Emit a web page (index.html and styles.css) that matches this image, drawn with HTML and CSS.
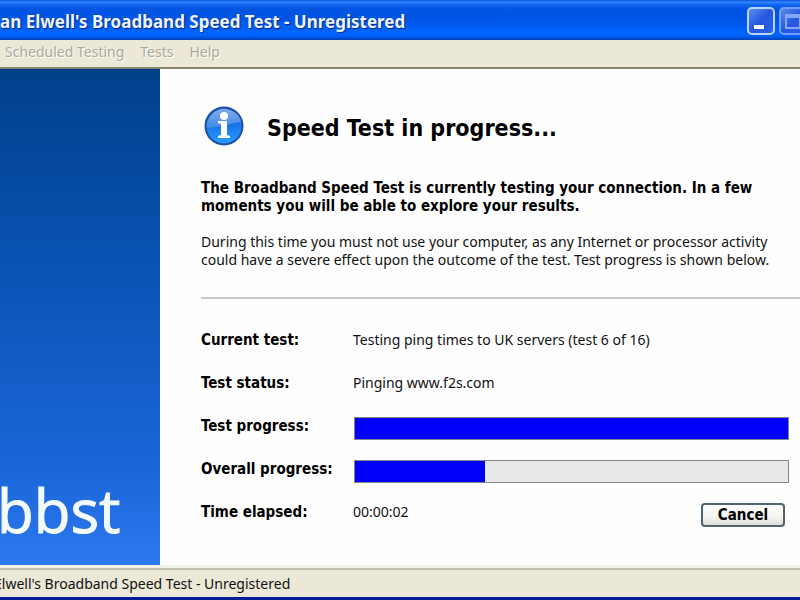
FILE: index.html
```html
<!DOCTYPE html>
<html lang="en">
<head>
    <meta charset="UTF-8">
    <meta name="viewport" content="width=device-width, initial-scale=1.0">
    <title>Broadband Speed Test</title>
    <link rel="stylesheet" href="styles.css">
</head>
<body>
    <header class="titlebar">
        <h1>an Elwell's Broadband Speed Test - Unregistered</h1>
        <div class="window-buttons">
            <button type="button" aria-label="Minimize">
                <svg width="24" height="24" viewBox="0 0 24 24"><path d="M5 16h10v4H5z" fill="#fff"/></svg>
            </button>
            <button type="button" class="disabled" aria-label="Maximize" disabled>
                <svg width="24" height="24" viewBox="0 0 24 24"><path d="M5 6h14v13H5zM5 8h14" fill="none" stroke="#86a5f5" stroke-width="2"/></svg>
            </button>
        </div>
    </header>
    <nav class="menu">
        <button type="button" disabled>Scheduled Testing</button>
        <button type="button" disabled>Tests</button>
        <button type="button" disabled>Help</button>
    </nav>
    <div class="window">
        <aside class="sidebar">bbst</aside>
        <main>
            <div class="heading">
                <svg width="40" height="40" viewBox="0 0 40 40">
                    <defs>
                        <linearGradient id="ball" x1="0" y1="0" x2="0" y2="1">
                            <stop offset="0" stop-color="#2263cf"/>
                            <stop offset="0.5" stop-color="#1b75e8"/>
                            <stop offset="1" stop-color="#2ba2ff"/>
                        </linearGradient>
                        <linearGradient id="shine" x1="0" y1="0" x2="0" y2="1">
                            <stop offset="0" stop-color="#fff" stop-opacity="0.45"/>
                            <stop offset="1" stop-color="#fff" stop-opacity="0.15"/>
                        </linearGradient>
                    </defs>
                    <circle cx="20" cy="20" r="18.5" fill="url(#ball)" stroke="#1d4fae" stroke-width="2"/>
                    <path d="M3 22C2 11 11 3 20 3s17 7 17 13C29 16 18 21 3 22z" fill="url(#shine)"/>
                    <circle cx="20" cy="10" r="4" fill="#fff"/>
                    <path d="M14 15h9v14l3 1v2H14v-2l3-1V18l-3-1z" fill="#fff"/>
                </svg>
                <h2>Speed Test in progress...</h2>
            </div>
            <p class="important">The Broadband Speed Test is currently testing your connection. In a few<br>moments you will be able to explore your results.</p>
            <p>During this time you must not use your computer, as any Internet or processor activity<br>could have a severe effect upon the outcome of the test. Test progress is shown below.</p>
            <hr>
            <dl class="status">
                <dt>Current test:</dt>
                <dd>Testing ping times to UK servers (test 6 of 16)</dd>
                <dt>Test status:</dt>
                <dd>Pinging www.f2s.com</dd>
                <dt>Test progress:</dt>
                <dd><div class="bar"><div class="fill" style="width: 100%"></div></div></dd>
                <dt>Overall progress:</dt>
                <dd><div class="bar"><div class="fill" style="width: 30%"></div></div></dd>
                <dt>Time elapsed:</dt>
                <dd class="elapsed">00:00:02 <button type="button" class="cancel">Cancel</button></dd>
            </dl>
        </main>
    </div>
    <footer><span>Elwell's Broadband Speed Test - Unregistered</span></footer>
</body>
</html>
```

FILE: styles.css
```css
* {
    box-sizing: border-box;
}
body, h1, h2, p, dl, dd, button {
    margin: 0;
    padding: 0;
}
body {
    min-height: 100vh;
    display: flex;
    flex-direction: column;
    overflow-x: hidden;
    font-family: Tahoma, "Noto Sans", sans-serif;
    font-size: 14px;
    line-height: 18px;
    color: #111;
    background-color: #fefefe;
}
button {
    font: inherit;
}
h2, dt, .important, .cancel {
    font-family: Tahoma, "DejaVu Sans Condensed", "DejaVu Sans", sans-serif;
    font-stretch: condensed;
    font-weight: bold;
    font-size: 15px;
    color: #000;
}

/* Title bar */
.titlebar {
    height: 40px;
    display: flex;
    align-items: center;
    justify-content: space-between;
    padding-top: 3px;
    overflow: hidden;
    background: linear-gradient(#0a50d8 0, #2f86fb 2px, #0f62ee 5px, #0054e0 10px, #0055e8 20px, #0065ff 32px, #0060f5 36px, #0040b8 40px);
}
h1 {
    font-family: "Trebuchet MS", "Noto Sans", sans-serif;
    font-size: 17px;
    font-weight: bold;
    line-height: 24px;
    white-space: nowrap;
    color: #eef5ff;
    text-shadow: 1px 1px 1px #0a2a80;
}
.window-buttons {
    display: flex;
    flex-shrink: 0;
    gap: 4px;
    margin-right: -7px;
    margin-bottom: 2px;
}
.window-buttons button {
    width: 28px;
    height: 28px;
    border: 2px solid #b9d3ff;
    border-radius: 5px;
    background: linear-gradient(135deg, #5b8cf0, #2558de 50%, #2a62ea);
}
.window-buttons .disabled {
    border-color: #6f9cf8;
}
.window-buttons svg {
    display: block;
}

/* Menu */
.menu {
    height: 29px;
    display: flex;
    gap: 16px;
    padding: 2px 5px 6px;
    background-color: #ebe8d7;
    border-bottom: 2px solid #85826f;
}
.menu button {
    border: none;
    background: none;
    color: #aaa899;
    text-shadow: 1px 1px 0 #fff;
}

/* Content */
.window {
    flex: 1;
    display: flex;
}
.sidebar {
    width: 20%;
    display: flex;
    align-items: flex-end;
    padding-bottom: 19px;
    font-family: "Open Sans", "Noto Sans", sans-serif;
    font-size: 60px;
    line-height: 72px;
    text-indent: -3px;
    color: #f4fbff;
    -webkit-text-stroke: 1px #f4fbff;
    background: linear-gradient(#00408a, #0a53b4 40%, #1a66d8 80%, #2c78ee);
}
main {
    flex: 1;
    padding: 37px 0 32px 41px;
}
.heading {
    display: flex;
    align-items: center;
    gap: 23px;
    padding-left: 3px;
    margin-bottom: 33px;
}
h2 {
    padding-top: 4px;
    font-size: 23px;
    line-height: 28px;
}
p {
    margin-bottom: 18px;
}
hr {
    height: 2px;
    margin: 28px 0 29px;
    border: none;
    background-color: #c8c8c8;
}
.status {
    display: grid;
    grid-template-columns: 152px 1fr;
    grid-auto-rows: 23px;
    row-gap: 20px;
    align-items: center;
    padding-right: 11px;
}
.bar {
    height: 23px;
    margin: 6px 0 0 1px;
    border: 1px solid #85858c;
    background-color: #e8e8e8;
}
.fill {
    height: 100%;
    background-color: #0000fa;
}
.elapsed {
    display: flex;
    align-items: center;
    justify-content: space-between;
}
.cancel {
    width: 84px;
    height: 24px;
    margin: 6px 4px 0 0;
    border: 2px solid #50636e;
    border-radius: 4px;
    background: linear-gradient(#fff, #f4f4f0 60%, #dcdcd8);
}

/* Status bar */
footer {
    height: 35px;
    padding-top: 7px;
    overflow: hidden;
    border-top: 3px solid #f3f1e6;
    border-bottom: 3px solid #001c96;
    background: linear-gradient(#c3c0ae 2px, #ebe8d7 2px);
}
footer span {
    margin-left: -6px;
}
```
